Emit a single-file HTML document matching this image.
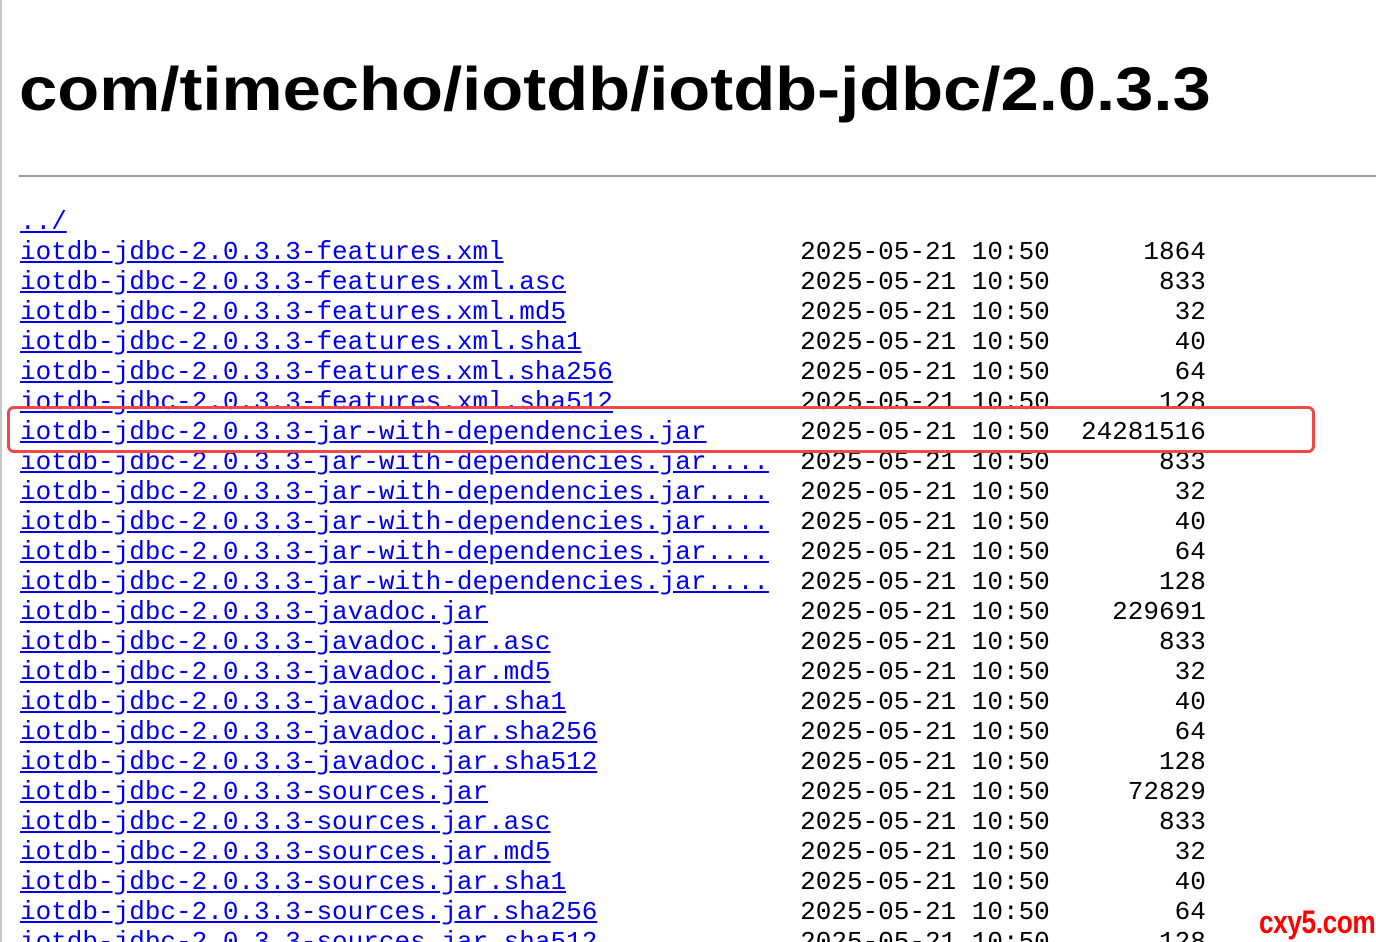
<!DOCTYPE html>
<html><head><meta charset="utf-8"><style>
html,body{margin:0;padding:0;background:#fff;width:1376px;height:942px;overflow:hidden}
body{border-left:2px solid #c8c8c8;box-sizing:border-box;position:relative}
h1{position:absolute;left:17px;top:51px;margin:0;font:bold 61px/76px "Liberation Sans",sans-serif;color:#000;letter-spacing:0;white-space:nowrap;transform:scaleX(1.127);transform-origin:left}
hr{position:absolute;left:17px;top:175px;width:1380px;margin:0;border:0;border-top:2px solid #9a9a9a}
pre{position:absolute;left:18px;top:207px;margin:0;font:26px/30px "Liberation Mono",monospace;color:#000}
a{color:#0000ee;text-decoration:underline}
.box{position:absolute;left:5px;top:406px;width:1302px;height:41px;border:3px solid #f04848;border-radius:7px}
.wm{position:absolute;left:1257px;top:902px;font:bold 32px/40px "Liberation Sans",sans-serif;color:#ff0000;transform:scaleX(0.82);transform-origin:left;letter-spacing:-0.5px}
</style></head><body>
<h1>com/timecho/iotdb/iotdb-jdbc/2.0.3.3</h1>
<hr>
<pre><a>../</a>
<a>iotdb-jdbc-2.0.3.3-features.xml</a>                   2025-05-21 10:50      1864
<a>iotdb-jdbc-2.0.3.3-features.xml.asc</a>               2025-05-21 10:50       833
<a>iotdb-jdbc-2.0.3.3-features.xml.md5</a>               2025-05-21 10:50        32
<a>iotdb-jdbc-2.0.3.3-features.xml.sha1</a>              2025-05-21 10:50        40
<a>iotdb-jdbc-2.0.3.3-features.xml.sha256</a>            2025-05-21 10:50        64
<a>iotdb-jdbc-2.0.3.3-features.xml.sha512</a>            2025-05-21 10:50       128
<a>iotdb-jdbc-2.0.3.3-jar-with-dependencies.jar</a>      2025-05-21 10:50  24281516
<a>iotdb-jdbc-2.0.3.3-jar-with-dependencies.jar....</a>  2025-05-21 10:50       833
<a>iotdb-jdbc-2.0.3.3-jar-with-dependencies.jar....</a>  2025-05-21 10:50        32
<a>iotdb-jdbc-2.0.3.3-jar-with-dependencies.jar....</a>  2025-05-21 10:50        40
<a>iotdb-jdbc-2.0.3.3-jar-with-dependencies.jar....</a>  2025-05-21 10:50        64
<a>iotdb-jdbc-2.0.3.3-jar-with-dependencies.jar....</a>  2025-05-21 10:50       128
<a>iotdb-jdbc-2.0.3.3-javadoc.jar</a>                    2025-05-21 10:50    229691
<a>iotdb-jdbc-2.0.3.3-javadoc.jar.asc</a>                2025-05-21 10:50       833
<a>iotdb-jdbc-2.0.3.3-javadoc.jar.md5</a>                2025-05-21 10:50        32
<a>iotdb-jdbc-2.0.3.3-javadoc.jar.sha1</a>               2025-05-21 10:50        40
<a>iotdb-jdbc-2.0.3.3-javadoc.jar.sha256</a>             2025-05-21 10:50        64
<a>iotdb-jdbc-2.0.3.3-javadoc.jar.sha512</a>             2025-05-21 10:50       128
<a>iotdb-jdbc-2.0.3.3-sources.jar</a>                    2025-05-21 10:50     72829
<a>iotdb-jdbc-2.0.3.3-sources.jar.asc</a>                2025-05-21 10:50       833
<a>iotdb-jdbc-2.0.3.3-sources.jar.md5</a>                2025-05-21 10:50        32
<a>iotdb-jdbc-2.0.3.3-sources.jar.sha1</a>               2025-05-21 10:50        40
<a>iotdb-jdbc-2.0.3.3-sources.jar.sha256</a>             2025-05-21 10:50        64
<a>iotdb-jdbc-2.0.3.3-sources.jar.sha512</a>             2025-05-21 10:50       128
</pre>
<div class="box"></div>
<div class="wm">cxy5.com</div>
</body></html>
